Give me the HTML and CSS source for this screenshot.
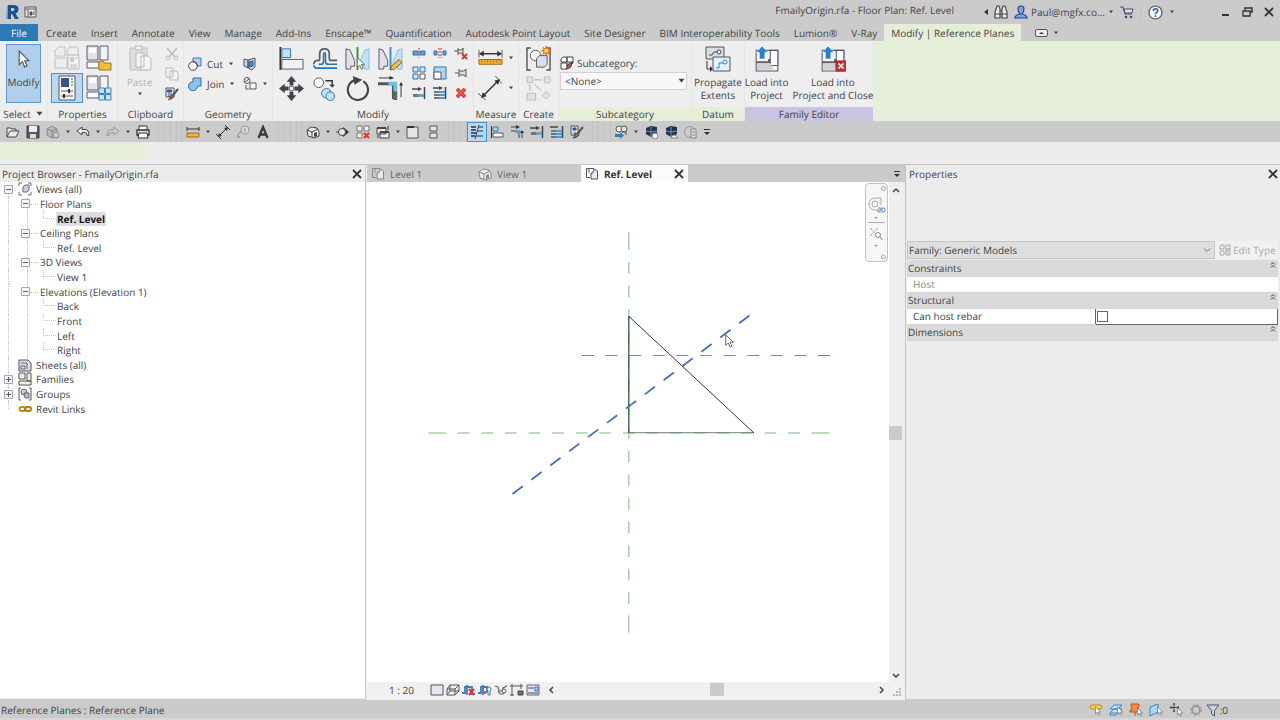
FILE: index.html
```
<!DOCTYPE html>
<html lang="en">
<head>
<meta charset="utf-8">
<title>FmailyOrigin.rfa - Floor Plan: Ref. Level</title>
<link rel="stylesheet" href="styles.css">
</head>
<body>
<svg class="sprite" aria-hidden="true">
  <symbol id="down" viewBox="0 0 6 4"><path d="M1 .5h4L3 3.2z" fill="#444"/></symbol>
  <symbol id="close" viewBox="0 0 10 10"><path d="M1 1l8 8M9 1L1 9" stroke="#333" stroke-width="1.8" fill="none"/></symbol>
  <symbol id="up2" viewBox="0 0 6 8"><path d="M1 3.5l2-2 2 2M1 6.5l2-2 2 2" stroke="#444" fill="none"/></symbol>
  <symbol id="minus" viewBox="0 0 9 9"><path d="M.5.5h8v8h-8z" fill="#f4f4f4" stroke="#a8a8a8"/><path d="M2 4.5h5" stroke="#4b5a86"/></symbol>
  <symbol id="plus" viewBox="0 0 9 9"><path d="M.5.5h8v8h-8z" fill="#f4f4f4" stroke="#a8a8a8"/><path d="M2 4.5h5M4.5 2v5" stroke="#4b5a86"/></symbol>
  <symbol id="cursor" viewBox="0 0 10 16"><path d="M.7 1v12l2.9-2.7 2 4.7 2.1-1-2-4.4h3.7z" fill="#fff" stroke="#555"/></symbol>
  <symbol id="plan" viewBox="0 0 14 14"><path d="M9 4V1.500H1.500v9H5M4 1.500v4" fill="none" stroke="currentColor"/><path d="M6 6h2V4l2-1.500L12.500 4v8H6z" fill="#e8e8ef" stroke="currentColor"/></symbol>
  <symbol id="house" viewBox="0 0 14 14"><path d="M1 5l4-3 6 1 2 4v4l-5 2-6-2z" fill="#eee" stroke="currentColor"/><path d="M1 5l5 2 6-3M6 7v5" fill="none" stroke="currentColor"/><path d="M8 8l3-1v4l-3 1z" fill="currentColor"/></symbol>
  <symbol id="family" viewBox="0 0 24 24"><path d="M1 1h11v14H1z" fill="#e3e3ea" stroke="#5b5d66"/><path d="M14 1h8v14h-8z" fill="#f2f2f5" stroke="#5b5d66"/><path d="M1 17h12v6H1z" fill="#fafafa" stroke="#5b5d66"/><path d="M3 3h7v5H3z" fill="#fff"/></symbol>
  <symbol id="box" viewBox="0 0 24 24"><path d="M2 4h20v19H2z" fill="#f5f5f5" stroke="#5b5d66"/><path d="M15 4h7v14h-7z" fill="#fff" stroke="#5b5d66"/><path d="M2 15h12v-3" fill="none" stroke="#5b5d66" stroke-width="2"/><path d="M3 16h12l3 6H3z" fill="#cfcfd6"/><path d="M5 12V6H2l5.500-6L13 6h-3v6z" fill="#2b7cd3" stroke="#fff" stroke-width=".5"/></symbol>
</svg>

<header class="titlebar">
  <svg class="i16" viewBox="0 0 16 16"><path d="M3 2l3-1v14H2z" fill="#6aa3d6"/><path d="M4 1h6.500q4 .5 4 4t-3 4.500L15 15h-4l-3-5H7v5H4z" fill="#17568f"/><path d="M7 4h2.500q2 1.500 0 3H7z" fill="#cbcbcb"/></svg>
  <svg class="i16" viewBox="0 0 16 16"><path d="M2 3h11v10H2z" fill="#eee" stroke="#555"/><path d="M2 5h11M5 5v8" stroke="#555"/><path d="M7 8h2v3H7zM10 8h2M10 10h2" stroke="#555" fill="#555"/></svg>
  <span class="doc">FmailyOrigin.rfa - Floor Plan: Ref. Level</span>
  <div class="account">
    <button class="ib" aria-label="Collapse"><svg width="4" height="6" viewBox="0 0 4 6"><path d="M4 0v6L0 3z" fill="#333"/></svg></button>
    <button class="ib" aria-label="Search"><svg class="i14" viewBox="0 0 14 14"><path d="M2 4l1-3h2l1 3v9H1V7zM12 4l-1-3H9L8 4v9h5V7zM6 6h2v3H6z" fill="#e8e8e8" stroke="#484850" stroke-width="1.200"/><path d="M1 9h5M8 9h5" stroke="#484850"/></svg></button>
    <button class="ib user"><svg class="i14" viewBox="0 0 14 14"><path d="M4 4q0-3 3-3t3 3-2 5q5 1 5 4H1q0-3 5-4Q4 7 4 4z" fill="#7da0e8" stroke="#25458c" stroke-width="1.200"/></svg>Paul@mgfx.co...<svg class="dn"><use href="#down"/></svg></button>
    <button class="ib" aria-label="Store"><svg class="i14" viewBox="0 0 14 14"><path d="M0 2h3l2 7h7" fill="none" stroke="#44506e" stroke-width="1.200"/><path d="M4 4h9l-1 4H5z" fill="#dde" stroke="#44506e"/><circle cx="6" cy="12" r="1.300" fill="#44506e"/><circle cx="11" cy="12" r="1.300" fill="#44506e"/></svg></button>
    <button class="ib help" aria-label="Help"><svg width="15" height="15" viewBox="0 0 15 15"><circle cx="7.500" cy="7.500" r="6.500" fill="#f6f8ff" stroke="#555" stroke-width="1.200"/><path d="M5.300 6q0-2.300 2.200-2.300T9.700 6Q9.700 7 7.500 8.500V9.300" stroke="#2b55b8" stroke-width="1.500" fill="none"/><path d="M6.700 10.300h1.600v1.600H6.700z" fill="#2b55b8"/></svg><svg class="dn"><use href="#down"/></svg></button>
  </div>
  <div class="winctl">
    <button class="ib" aria-label="Minimize"><svg width="10" height="10" viewBox="0 0 10 10"><path d="M1 8h7" stroke="#333" stroke-width="2"/></svg></button>
    <button class="ib" aria-label="Restore"><svg width="11" height="10" viewBox="0 0 11 10"><path d="M3 3V1h7v4H8" fill="none" stroke="#333" stroke-width="1.500"/><path d="M1 4h7v5H1z" fill="none" stroke="#333" stroke-width="1.300"/></svg></button>
    <button class="ib" aria-label="Close"><svg class="x"><use href="#close"/></svg></button>
  </div>
</header>

<nav class="tabs">
  <button class="tab file">File</button><button class="tab">Create</button><button class="tab">Insert</button><button class="tab">Annotate</button><button class="tab">View</button><button class="tab">Manage</button><button class="tab">Add-Ins</button><button class="tab">Enscape™</button><button class="tab">Quantification</button><button class="tab">Autodesk Point Layout</button><button class="tab">Site Designer</button><button class="tab">BIM Interoperability Tools</button><button class="tab">Lumion®</button><button class="tab">V-Ray</button><button class="tab current">Modify | Reference Planes</button>
  <button class="ib ribbonmode" aria-label="Ribbon display"><svg width="13" height="8" viewBox="0 0 13 8"><rect x=".5" y=".5" width="12" height="7" rx="1.500" fill="#eee" stroke="#555"/><path d="M4 5h5L6.500 3z" fill="#333"/></svg><svg class="dn"><use href="#down"/></svg></button>
</nav>

<section class="ribbon">
  <div class="panel">
    <div class="body select"><button class="modify"><svg width="12" height="18"><use href="#cursor"/></svg>Modify</button></div>
    <h2>Select <svg class="dn big"><use href="#down"/></svg></h2>
  </div>
  <div class="panel">
    <div class="body pair">
      <button class="ib" aria-label="Type properties"><svg class="i26" viewBox="0 0 26 26"><path d="M1 6l3-4h7v9H1zM13 6l3-4h8v8H13zM1 13h12v10H1z" fill="#eee" stroke="#c0c0c0"/><path d="M14 10h11v14H14z" fill="#f2f2f2" stroke="#bbb"/><path d="M16 12h4v5h-4z" fill="#ccc"/><path d="M16 20h7M16 22h7M21 13h3" stroke="#bbb"/></svg></button>
      <button class="ib" aria-label="Family category"><svg class="i26" viewBox="0 0 26 26"><use href="#family" width="24" height="24"/><path d="M13 16h4l1 2h7v7H13z" fill="#f2bc3c" stroke="#a8771c"/></svg></button>
      <button class="ib on" aria-label="Properties"><svg class="i26" viewBox="0 0 26 26"><path d="M5 1h16v24H5z" fill="#fafafa" stroke="#555"/><path d="M7 3h8v9H7z" fill="#33568c"/><path d="M17 4h2M17 7h2M17 10h2M7 16h12M7 21h12" stroke="#555"/><path d="M15 14v4M10 19v4" stroke="#333" stroke-width="2"/></svg></button>
      <button class="ib" aria-label="Family types"><svg class="i26" viewBox="0 0 26 26"><use href="#family" width="24" height="24"/><path d="M13 13h5.500v5.500H13zM19.500 13H25v5.500h-5.500zM13 19.500h5.500V25H13zM19.500 19.500H25V25h-5.500z" fill="#c4e6fa" stroke="#3d84ba"/></svg></button>
    </div>
    <h2>Properties</h2>
  </div>
  <div class="panel">
    <div class="body clip">
      <button class="paste" disabled><svg width="26" height="28" viewBox="0 0 26 28"><path d="M3 4h17v22H3z" fill="#ddd" stroke="#bcbcbc"/><path d="M8 2h7v4H8z" fill="#eee" stroke="#bcbcbc"/><path d="M9 9h8v14H9zM14 12h7l3 3v11H14z" fill="#f4f4f4" stroke="#bbb"/></svg>Paste<svg class="dn"><use href="#down"/></svg></button>
      <div class="trio">
        <button class="ib" aria-label="Cut"><svg class="i14" viewBox="0 0 14 14"><path d="M2 1l8 9M12 1L4 10" stroke="#bbb" stroke-width="1.500"/><circle cx="3" cy="11" r="2" fill="none" stroke="#bbb"/><circle cx="11" cy="11" r="2" fill="none" stroke="#bbb"/></svg></button>
        <button class="ib" aria-label="Copy"><svg class="i14" viewBox="0 0 14 14"><path d="M1 1h7v9H1zM5 4h6l2 2v7H5z" fill="#f0f0f0" stroke="#bbb"/></svg></button>
        <button class="ib" aria-label="Match type"><svg class="i14" viewBox="0 0 14 14"><path d="M1 1h8v9H1z" fill="#e2e7f5" stroke="#555"/><path d="M2.500 3h4v2h-4zM3 7h4M3 9h3" stroke="#33568c" fill="#33568c"/><path d="M13 2L8 8" stroke="#555" stroke-width="2"/><path d="M9 7q1 5-6 6 2-1 2-4z" fill="#8b6248" stroke="#444" stroke-width=".6"/></svg></button>
      </div>
    </div>
    <h2>Clipboard</h2>
  </div>
  <div class="panel">
    <div class="body geom">
      <button class="ib lbl"><svg class="i14" viewBox="0 0 14 14"><path d="M5 1h8v8H5z" fill="#a9d8f5" stroke="#3d74a8"/><circle cx="5" cy="9" r="4.300" fill="#fff" stroke="#444"/><path d="M5 4.700A4.300 4.300 0 019.300 9" fill="none" stroke="#c24" stroke-width="1.300"/></svg>Cut<svg class="dn"><use href="#down"/></svg></button>
      <button class="ib" aria-label="Cope"><svg class="i14" viewBox="0 0 14 14"><path d="M1 2l4 1v8l-4-2zM5 3l7-2v9l-3 3-4-2z" fill="#bfd8ee" stroke="#555"/><path d="M6 5l4-1v5l-4 1z" fill="#4a8fd0" stroke="#27598c"/></svg></button>
      <button class="ib lbl"><svg class="i14" viewBox="0 0 14 14"><path d="M5 1h8v8H9.500A4.500 4.500 0 115 4.700z" fill="#8ac4ee" stroke="#2c6ca6"/></svg>Join<svg class="dn"><use href="#down"/></svg></button>
      <button class="ib" aria-label="Paint"><svg class="i14" viewBox="0 0 14 14"><circle cx="4" cy="3.500" r="3" fill="#eee" stroke="#555"/><path d="M2 5l4-3M3 8v4h3M7 6h6v6H7z" fill="#fff" stroke="#555"/></svg><svg class="dn"><use href="#down"/></svg></button>
    </div>
    <h2>Geometry</h2>
  </div>
  <div class="panel">
    <div class="body edit">
      <div class="big8">
        <button class="ib" aria-label="Align"><svg class="i26" viewBox="0 0 26 26"><path d="M1.500 1v24" stroke="#333" stroke-width="2"/><path d="M3 3h9v9H3z" fill="#bfe2fa" stroke="#2f74ad"/><path d="M3 14h22v10H3z" fill="#f2f2f6" stroke="#5b5d66"/></svg></button>
        <button class="ib" aria-label="Offset"><svg class="i26" viewBox="0 0 26 26"><path d="M26 15h-7q-1 0-1-2V8q0-5-5-5T8 8v5q0 2-1 2H6q-4 0-4 4" fill="none" stroke="#5b5d66" stroke-width="1.800"/><path d="M26 19h-9q-3 0-3-3V8q0-1-1-1t-1 1v8q0 3-3 3H7M26 23H5q-3 0-3-3" fill="none" stroke="#2f74ad" stroke-width="1.600"/></svg></button>
        <button class="ib" aria-label="Mirror by axis"><svg class="i26" viewBox="0 0 26 26"><path d="M1 3l4 1 5 11v6h-4v3H1z" fill="#dfe1e7" stroke="#5b5d66"/><path d="M25 3l-4 1-5 11v6h4v3h5z" fill="#bfe2fa" stroke="#8bbbd8"/><path d="M13 1v24" stroke="#489035" stroke-width="2"/><use href="#cursor" x="12" y="11" width="9" height="14"/></svg></button>
        <button class="ib" aria-label="Mirror by drawing"><svg class="i26" viewBox="0 0 26 26"><path d="M1 3l4 1 5 11v6h-4v3H1z" fill="#dfe1e7" stroke="#5b5d66"/><path d="M25 3l-4 1-5 11v6h4v3h5z" fill="#bfe2fa" stroke="#8bbbd8"/><path d="M13 1v24" stroke="#4488bd" stroke-width="2"/><path d="M13 25l1-4 8-7 3 3-8 7z" fill="#f2bc3c" stroke="#8e5b26"/></svg></button>
        <button class="ib" aria-label="Move"><svg class="i26" viewBox="0 0 26 26"><path d="M13 0l5 6h-3v4h-4V6H8zM13 26l5-6h-3v-4h-4v4H8zM0 13l6-5v3h4v4H6v3zM26 13l-6-5v3h-4v4h4v3z" fill="#41434a"/><path d="M11 11h4v4h-4z" fill="#fff" stroke="#777"/></svg></button>
        <button class="ib" aria-label="Copy objects"><svg class="i26" viewBox="0 0 26 26"><circle cx="7" cy="7" r="5" fill="#fff" stroke="#555"/><path d="M14 5h7v5" fill="none" stroke="#333" stroke-width="1.500"/><path d="M18 9h6l-3 3z" fill="#333"/><circle cx="15" cy="18" r="5" fill="#bfe2fa" stroke="#2f74ad"/><circle cx="19" cy="21" r="4.500" fill="#bfe2fa" stroke="#2f74ad"/></svg></button>
        <button class="ib" aria-label="Rotate"><svg class="i26" viewBox="0 0 26 26"><path d="M10 4.500A10.500 10.500 0 1 0 19 5.500" fill="none" stroke="#41434a" stroke-width="2.200"/><path d="M8 0l10 4-8 5z" fill="#41434a"/></svg></button>
        <button class="ib" aria-label="Trim to corner"><svg class="i26" viewBox="0 0 26 26"><path d="M0 8h16v16" fill="none" stroke="#555" stroke-width="3"/><path d="M11 8h7v8" fill="none" stroke="#6ebcec" stroke-width="4"/><path d="M18 16v9" stroke="#666" stroke-width="4"/><path d="M1 2h13M24 22V9" stroke="#333"/><path d="M12 0l5 2-5 2zM22 10l2-4 2 4z" fill="#333"/></svg></button>
      </div>
      <div class="small9">
        <button class="ib" aria-label="Split"><svg class="i14" viewBox="0 0 14 14"><path d="M1 5h5v4H1zM8 5h5v4H8z" fill="#5aa5dc" stroke="#2f74ad"/><path d="M7 2v10" stroke="#c33" stroke-dasharray="2 1"/></svg></button>
        <button class="ib" aria-label="Split with gap"><svg class="i14" viewBox="0 0 14 14"><path d="M1 5h3v4H1zM10 5h3v4h-3z" fill="#5aa5dc" stroke="#2f74ad"/><path d="M6 2v10M8 2v10" stroke="#c33" stroke-dasharray="2 1"/></svg></button>
        <button class="ib" aria-label="Unpin"><svg class="i14" viewBox="0 0 14 14"><path d="M0 5h4M4 2v7M4 4h4l1-2v7L8 7H4" fill="none" stroke="#555"/><path d="M8 8l5 5M13 8l-5 5" stroke="#d33" stroke-width="2"/></svg></button>
        <button class="ib" aria-label="Array"><svg class="i14" viewBox="0 0 14 14"><path d="M1 1h5v5H1zM8 1h5v5H8zM1 8h5v5H1z" fill="#c4e6fa" stroke="#2f74ad"/><path d="M8 8h5v5H8z" fill="#fff" stroke="#555"/></svg></button>
        <button class="ib" aria-label="Scale"><svg class="i14" viewBox="0 0 14 14"><path d="M1 1h12v12H1z" fill="#a9d8f5" stroke="#2f74ad"/><path d="M1 6h7v7H1z" fill="#fff" stroke="#555"/></svg></button>
        <button class="ib" aria-label="Pin"><svg class="i14" viewBox="0 0 14 14"><path d="M1 7h4M5 3v8M5 5h5l2-2v8l-2-2H5" fill="#ddd" stroke="#555"/></svg></button>
        <button class="ib" aria-label="Trim single"><svg class="i14" viewBox="0 0 14 14"><path d="M0 3h8M12.500 1v12" stroke="#444" stroke-width="1.500"/><path d="M6 1l4 2-4 2z" fill="#444"/><path d="M1 8h5v3H1z" fill="#777"/><path d="M6 8h6v3H6z" fill="#5aa5dc"/></svg></button>
        <button class="ib" aria-label="Trim multiple"><svg class="i14" viewBox="0 0 14 14"><path d="M0 2h8M12.500 1v12" stroke="#444" stroke-width="1.500"/><path d="M1 6h5M1 9h5M1 12h5" stroke="#777" stroke-width="2"/><path d="M6 6h6M6 9h6M6 12h6" stroke="#4a9ddc" stroke-width="2"/><path d="M6 0l4 2-4 2z" fill="#444"/></svg></button>
        <button class="ib" aria-label="Delete"><svg class="i14" viewBox="0 0 14 14"><path d="M3 3l8 8M11 3l-8 8" stroke="#b52a2a" stroke-width="3.600"/><path d="M3 3l8 8M11 3l-8 8" stroke="#ee5252" stroke-width="2"/></svg></button>
      </div>
    </div>
    <h2>Modify</h2>
  </div>
  <div class="panel">
    <div class="body measure">
      <button class="ib" aria-label="Measure"><svg class="i26" viewBox="0 0 26 26"><path d="M2 8h22" stroke="#333" stroke-width="1.500"/><path d="M1 8l5-3v6zM25 8l-5-3v6z" fill="#333"/><path d="M1 4v8M25 4v8" stroke="#555"/><path d="M1 14h24v5H1z" fill="#f5b335" stroke="#9b6a1c"/><path d="M4 15v2M7 15v2M10 15v2M13 15v2M16 15v2M19 15v2M22 15v2" stroke="#9b6a1c"/></svg><svg class="dn"><use href="#down"/></svg></button>
      <button class="ib" aria-label="Aligned dimension"><svg class="i26" viewBox="0 0 26 26"><path d="M5 21L21 5" stroke="#333" stroke-width="1.500"/><path d="M3 23l2-6 4 4zM23 3l-2 6-4-4z" fill="#333"/><path d="M0 18l8 7M18 0l7 8" stroke="#555"/></svg><svg class="dn"><use href="#down"/></svg></button>
    </div>
    <h2>Measure</h2>
  </div>
  <div class="panel">
    <div class="body create">
      <button class="ib" aria-label="Create group"><svg class="i26" viewBox="0 0 26 26"><path d="M5 2H1v23h4M21 2h4v23h-4" fill="none" stroke="#555" stroke-width="1.500"/><circle cx="10" cy="10" r="5.500" fill="#f3f3f6" stroke="#555"/><path d="M11 13l3-3h8v9l-3 3h-8z" fill="#dcdde6" stroke="#555"/><path d="M21 0v10M16 5h10M17.500 1.500l7 7M24.500 1.500l-7 7" stroke="#e06a1b" stroke-width="1.500"/><circle cx="21" cy="5" r="2.800" fill="#ffd55c" stroke="#e06a1b"/></svg></button>
      <button class="ib" aria-label="Create similar"><svg class="i26" viewBox="0 0 26 26"><path d="M1 1h6v6H1zM19 1h6v6h-6zM1 18h9v7H1zM21 16l4 4-4 4-4-4z" fill="#e2e2e2" stroke="#bbb"/><path d="M9 4h7M4 9v6M9 9l7 6" stroke="#aaa"/></svg></button>
    </div>
    <h2>Create</h2>
  </div>
  <div class="panel green">
    <div class="body subcat">
      <label for="subcat"><svg class="i14" viewBox="0 0 14 14"><path d="M1 3l2-2h4v5H1zM7 1h6v5H7zM1 7h6v6H1z" fill="#fff" stroke="#444"/><path d="M13 6l-3 3" stroke="#444" stroke-width="2"/><path d="M11 7q2 5-5 6 2-1 1-4z" fill="#9d6252" stroke="#633"/></svg>Subcategory:</label>
      <div class="combo"><select id="subcat"><option>&lt;None&gt;</option></select><svg class="dn big"><use href="#down"/></svg></div>
    </div>
    <h2>Subcategory</h2>
  </div>
  <div class="panel green">
    <div class="body"><button class="tall"><svg class="i26" viewBox="0 0 26 26"><path d="M1 1h18v12H1z" fill="#dcdde2" stroke="#555"/><path d="M4 9h3l2-3h3" fill="none" stroke="#444"/><circle cx="14" cy="6" r="2" fill="#fff" stroke="#444"/><path d="M2 15v8h3" fill="none" stroke="#333"/><path d="M5 20l3 3-3 3z" fill="#333"/><path d="M8 11h17v14H8z" fill="#e2f2fc" stroke="#555"/><path d="M11 22h3v-5h4" fill="none" stroke="#2f80c2"/><circle cx="20" cy="16" r="2" fill="#fff" stroke="#2f80c2"/></svg><span>Propagate<br>Extents</span></button></div>
    <h2>Datum</h2>
  </div>
  <div class="panel violet">
    <div class="body load">
      <button class="tall"><svg class="i26" viewBox="0 0 26 26"><use href="#box" width="26" height="26"/></svg><span>Load into<br>Project</span></button>
      <button class="tall"><svg class="i26" viewBox="0 0 26 26"><use href="#box" width="26" height="26"/><path d="M16 15h10v10H16z" fill="#cf3030" stroke="#942020"/><path d="M18.500 17.500l5 5M23.500 17.500l-5 5" stroke="#fff" stroke-width="1.500"/></svg><span>Load into<br>Project and Close</span></button>
    </div>
    <h2>Family Editor</h2>
  </div>
  <div class="rest"></div>
</section>

<div class="qat">
  <button class="ib q" aria-label="Open"><svg class="i14" viewBox="0 0 14 14"><path d="M1 12V3h4l1 1h4v2M1 12l3-6h9l-3 6z" fill="#eee" stroke="#444"/></svg></button>
  <button class="ib q" aria-label="Save"><svg class="i14" viewBox="0 0 14 14"><path d="M1 1h12v12H1z" fill="#55585f" stroke="#3d3f45"/><path d="M3 1h8v6H3z" fill="#eee"/><path d="M4 9h6v4H4z" fill="#ddd"/></svg></button>
  <button class="ib q" aria-label="Sync"><svg class="i14" viewBox="0 0 14 14"><path d="M1 4l5-3 5 3v6l-5 3-5-3z" fill="#bbb" stroke="#888"/><path d="M1 4l5 2 5-2M6 6v7" fill="none" stroke="#888"/><circle cx="10" cy="10" r="3" fill="#ccc" stroke="#888"/></svg></button><svg class="dn q"><use href="#down"/></svg>
  <button class="ib q" aria-label="Undo"><svg class="i14" viewBox="0 0 14 14"><path d="M1 6l5-4v2.500h3q4 0 4 6h-2q0-3-2-3H6V10z" fill="#eee" stroke="#444"/></svg></button><svg class="dn q"><use href="#down"/></svg>
  <button class="ib q" aria-label="Redo"><svg class="i14" viewBox="0 0 14 14"><path d="M13 6L8 2v2.500H5q-4 0-4 6h2q0-3 2-3h3V10z" fill="#ccc" stroke="#999"/></svg></button><svg class="dn q"><use href="#down"/></svg>
  <button class="ib q" aria-label="Print"><svg class="i14" viewBox="0 0 14 14"><path d="M3 5V1h8v4" fill="#fff" stroke="#333"/><path d="M1 5h12v5H1z" fill="#ddd" stroke="#333" stroke-width="1.300"/><path d="M3 8h8l1 5H2z" fill="#fff" stroke="#333"/></svg></button>
  <i class="grip"></i>
  <button class="ib q" aria-label="Measure"><svg class="i14" viewBox="0 0 14 14"><path d="M1 4h12M1 2v4M13 2v4" stroke="#333"/><path d="M1 8h12v4H1z" fill="#f5b335" stroke="#9b6a1c"/></svg></button><svg class="dn q"><use href="#down"/></svg>
  <button class="ib q" aria-label="Dimension"><svg class="i14" viewBox="0 0 14 14"><path d="M3 11l8-8M0 9l5 5M9 0l5 5" stroke="#333"/><path d="M2 12l1-4 3 3zM12 2l-1 4-3-3z" fill="#333"/></svg></button>
  <button class="ib q" aria-label="Tag"><svg class="i14" viewBox="0 0 14 14"><circle cx="9" cy="5" r="4" fill="#ddd" stroke="#999"/><path d="M9 3v4M2 12q0-5 3-5M1 12h3" stroke="#888" fill="none"/></svg></button>
  <button class="ib q" aria-label="Text"><svg class="i14" viewBox="0 0 14 14"><path d="M2.500 13L7 2l4.500 11M4.500 9.500h5" fill="none" stroke="#3a3a3a" stroke-width="2.300"/></svg></button>
  <i class="grip"></i>
  <button class="ib q dk" aria-label="3D view"><svg class="i14"><use href="#house"/></svg></button><svg class="dn q"><use href="#down"/></svg>
  <button class="ib q" aria-label="Section"><svg class="i14" viewBox="0 0 14 14"><path d="M7 2v10l6-5z" fill="#333"/><circle cx="6" cy="7" r="3.500" fill="#eee" stroke="#444"/><path d="M0 7h3" stroke="#444"/></svg></button>
  <button class="ib q" aria-label="Close hidden"><svg class="i14" viewBox="0 0 14 14"><path d="M1 1h5v5H1zM8 1h5v5H8zM1 8h5v5H1z" fill="#eee" stroke="#777"/><path d="M8 8l5 5M13 8l-5 5" stroke="#d33" stroke-width="2"/></svg></button>
  <button class="ib q" aria-label="Switch windows"><svg class="i14" viewBox="0 0 14 14"><path d="M1 3h9v6H1zM4 7h9v6H4z" fill="#eee" stroke="#444"/><path d="M1 3h9M4 7h9" stroke="#444" stroke-width="2"/><path d="M12 1v4M2 10v3" stroke="#333"/></svg></button><svg class="dn q"><use href="#down"/></svg>
  <button class="ib q" aria-label="Tab views"><svg class="i14" viewBox="0 0 14 14"><path d="M1 2h11v11H1z" fill="#e4e4ea" stroke="#555"/><path d="M1 2h7" stroke="#333" stroke-width="2"/></svg></button>
  <button class="ib q" aria-label="Tile views"><svg class="i14" viewBox="0 0 14 14"><path d="M4 1h7v5H4zM4 8h7v5H4z" fill="#e4e4ea" stroke="#555"/></svg></button>
  <i class="grip sm"></i>
  <button class="ib q on" aria-label="Thin lines"><svg class="i14" viewBox="0 0 14 14"><path d="M1 2h5M1 5h5M1 8h5M1 11h4" stroke="#333" stroke-width="1.500"/><path d="M8 2h5M7 6h6M6 11h7" stroke="#2f74ad" stroke-width="1.500"/><path d="M9 0L5 14" stroke="#444"/></svg></button>
  <button class="ib q" aria-label="Align"><svg class="i14" viewBox="0 0 14 14"><path d="M1.500 1v12" stroke="#333"/><path d="M3 2h5v4H3z" fill="#a9d8f5" stroke="#2f74ad"/><path d="M3 8h10v4H3z" fill="#fff" stroke="#555"/></svg></button>
  <button class="ib q" aria-label="Trim corner"><svg class="i14" viewBox="0 0 14 14"><path d="M1 2h7M1 6h8v7M12 13V7" fill="none" stroke="#444"/><path d="M5 6.500h4v4" fill="none" stroke="#4a9ddc" stroke-width="2.500"/><path d="M6 0l4 2-4 2zM10 8l2-3 2 3z" fill="#333"/></svg></button>
  <button class="ib q" aria-label="Trim single"><svg class="i14" viewBox="0 0 14 14"><path d="M0 3h8M12.500 1v12" stroke="#444" stroke-width="1.500"/><path d="M6 1l4 2-4 2z" fill="#444"/><path d="M1 7h5v3H1z" fill="#777"/><path d="M6 7h6v3H6z" fill="#5aa5dc"/></svg></button>
  <button class="ib q" aria-label="Trim multiple"><svg class="i14" viewBox="0 0 14 14"><path d="M0 2h8M12.500 1v12" stroke="#444" stroke-width="1.500"/><path d="M1 6h5M1 9h5M1 12h5" stroke="#777" stroke-width="2"/><path d="M6 6h6M6 9h6M6 12h6" stroke="#4a9ddc" stroke-width="2"/></svg></button>
  <button class="ib q" aria-label="Match"><svg class="i14" viewBox="0 0 14 14"><path d="M1 1h7v9H1z" fill="#e2e7f5" stroke="#555"/><path d="M3 3h3v2H3zM3 8h3" stroke="#33568c" fill="#33568c"/><path d="M13 2L8 8" stroke="#555" stroke-width="2"/><path d="M9 7q1 5-6 6 2-1 2-4z" fill="#777" stroke="#444"/></svg></button>
  <i class="grip sm"></i>
  <button class="ib q" aria-label="Export"><svg class="i14" viewBox="0 0 14 14"><circle cx="5" cy="4" r="3" fill="#eee" stroke="#555"/><circle cx="10" cy="4" r="3" fill="#ddd" stroke="#555"/><path d="M8 7h4v3" fill="none" stroke="#555"/><path d="M1 9h5V7l4 3.500L6 14v-2H1z" fill="#2b7cd3"/></svg></button><svg class="dn q"><use href="#down"/></svg>
  <button class="ib q" aria-label="Render"><svg class="i14" viewBox="0 0 14 14"><path d="M2 3l5-2 6 1v7l-6 3-5-3z" fill="#20324f"/><path d="M2 6l5 1 6-1M7 2v10" stroke="#8092b0" fill="none"/><circle cx="11" cy="11" r="3" fill="#eee" stroke="#888"/></svg></button>
  <button class="ib q" aria-label="Render cloud"><svg class="i14" viewBox="0 0 14 14"><path d="M2 3l5-2 6 1v7l-6 3-5-3z" fill="#20324f"/><path d="M2 6l5 1 6-1M7 2v10" stroke="#8092b0" fill="none"/><path d="M7 13q0-3 3-3t4 3z" fill="#eee" stroke="#888"/></svg></button>
  <button class="ib q" aria-label="Gallery"><svg class="i14" viewBox="0 0 14 14"><circle cx="6" cy="7" r="5.500" fill="#ccc" stroke="#999"/><path d="M7 4h5v9H7zM8 7h3M8 10h3" fill="#ddd" stroke="#888"/></svg></button>
  <button class="ib more" aria-label="Customize"><svg width="8" height="8" viewBox="0 0 8 8"><path d="M1 1.500h6" stroke="#333"/><path d="M1 4h6L4 7z" fill="#333"/></svg></button>
</div>
<div class="options"><div class="hint"></div></div>

<main class="work">
  <aside class="browser">
    <header class="bar"><span>Project Browser - FmailyOrigin.rfa</span><button class="ib" aria-label="Close browser"><svg class="x"><use href="#close"/></svg></button></header>
    <ul class="tree">
      <li class="l0 first"><svg class="ex"><use href="#minus"/></svg><svg class="i14" viewBox="0 0 14 14"><path d="M1 4V1h3M10 1h3v3M13 10v3h-3M4 13H1v-3" fill="none" stroke="#666"/><path d="M5 5l2-2h4v5l-2 2H5z" fill="#ccd" stroke="#667"/></svg><span>Views (all)</span></li>
      <li class="l1"><svg class="ex"><use href="#minus"/></svg><span>Floor Plans</span></li>
      <li class="l2"><span class="sel">Ref. Level</span></li>
      <li class="l1"><svg class="ex"><use href="#minus"/></svg><span>Ceiling Plans</span></li>
      <li class="l2"><span>Ref. Level</span></li>
      <li class="l1"><svg class="ex"><use href="#minus"/></svg><span>3D Views</span></li>
      <li class="l2"><span>View 1</span></li>
      <li class="l1"><svg class="ex"><use href="#minus"/></svg><span>Elevations (Elevation 1)</span></li>
      <li class="l2 cont"><span>Back</span></li>
      <li class="l2 cont"><span>Front</span></li>
      <li class="l2 cont"><span>Left</span></li>
      <li class="l2"><span>Right</span></li>
      <li class="l0"><i class="stub"></i><svg class="i14" viewBox="0 0 14 14"><path d="M1 2h9l3 3v8H1z" fill="#dde" stroke="#555"/><path d="M3 8h4v3H3zM3 5h6v6" fill="none" stroke="#667"/></svg><span>Sheets (all)</span></li>
      <li class="l0"><svg class="ex"><use href="#plus"/></svg><svg class="i14" viewBox="0 0 14 14"><path d="M1 1h6v6H1zM1 9h12v4H1zM9 1h4v8H9z" fill="#eee" stroke="#555"/></svg><span>Families</span></li>
      <li class="l0"><svg class="ex"><use href="#plus"/></svg><svg class="i14" viewBox="0 0 14 14"><path d="M3 1H1v12h2M11 1h2v12h-2" fill="none" stroke="#555"/><circle cx="6" cy="5" r="3" fill="#ccd" stroke="#667"/><path d="M6 6h5v5H7z" fill="#bbc" stroke="#667"/></svg><span>Groups</span></li>
      <li class="l0 last"><i class="stub"></i><svg class="i14" viewBox="0 0 14 14"><rect x="1.500" y="5" width="6" height="4" rx="2" fill="none" stroke="#c98a1b" stroke-width="2"/><rect x="7" y="5" width="6" height="4" rx="2" fill="none" stroke="#b87a14" stroke-width="2"/></svg><span>Revit Links</span></li>
    </ul>
  </aside>

  <section class="view">
    <div class="viewtabs">
      <button class="vt"><svg class="i14"><use href="#plan"/></svg>Level 1</button>
      <button class="vt"><svg class="i14"><use href="#house"/></svg>View 1</button>
      <button class="vt cur"><svg class="i14"><use href="#plan"/></svg>Ref. Level<svg class="x"><use href="#close"/></svg></button>
      <button class="ib listall" aria-label="All views"><svg width="8" height="8" viewBox="0 0 8 8"><path d="M1 1.500h6" stroke="#333"/><path d="M1 4h6L4 7z" fill="#333"/></svg></button>
    </div>
    <div class="stage">
      <svg class="drawing" viewBox="367 182 522 500">
        <g fill="none" stroke="#a6cfa6" stroke-width="1.500">
          <path d="M628.800 232.500v17.500M628.800 615.300v17.400"/>
          <path d="M628.800 262V604" stroke-dasharray="11.700 11.900"/>
          <path d="M428.500 432.900H446.500M811.500 432.900H829.500"/>
          <path d="M457.800 432.900H800" stroke-dasharray="11.700 11.900"/>
        </g>
        <path d="M582 355.500H830" fill="none" stroke="#5fa564" stroke-width="1.200" stroke-dasharray="12 11.600"/>
        <path d="M628.800 316V433" stroke="#365c38" stroke-width="1.300"/>
        <path d="M629 432.700H754" stroke="#6f806f"/>
        <path d="M629 316.500L754 433" stroke="#333"/>
        <path d="M512.500 494L749.500 315.500" stroke="#4870b0" stroke-width="1.800" stroke-dasharray="12.800 10.850"/>
        <use href="#cursor" x="725" y="334" width="9" height="14"/>
      </svg>
      <div class="navbar">
        <svg width="23" height="80" viewBox="0 0 23 80"><g fill="none" stroke="#aaa"><circle cx="17.500" cy="4.500" r="2"/><circle cx="17.500" cy="73" r="2"/><path d="M2 38.500h17"/><path d="M12 26H9a6 6 0 110-12h6v7"/><circle cx="9" cy="20" r="3"/></g><path d="M12 24h3v2h-3v2h3M16 24v4h2l1-1v-2l-1-1z" fill="none" stroke="#6d8fc4"/><path d="M8 33h4l-2 2zM8 61h4l-2 2z" fill="#999"/><path d="M5 45l6 6M5 51l6-6M4 45h2M10 45h2M4 51h2" stroke="#aaa" stroke-dasharray="2 1"/><circle cx="12" cy="51" r="2.500" fill="#fff" stroke="#888"/><path d="M14 53l2 3" stroke="#888"/></svg>
      </div>
    </div>
    <div class="vscroll">
      <svg width="8" height="6" viewBox="0 0 8 6"><path d="M1 5l3-3 3 3" stroke="#444" stroke-width="1.500" fill="none"/></svg>
      <i class="thumb"></i>
      <svg width="8" height="6" viewBox="0 0 8 6"><path d="M1 1l3 3 3-3" stroke="#444" stroke-width="1.500" fill="none"/></svg>
    </div>
    <div class="viewctl">
      <span class="scale">1 : 20</span>
      <div class="vicons">
        <button class="ib" aria-label="Detail level"><svg class="i14" viewBox="0 0 14 14"><path d="M1 2h12v10H1z" fill="#e6e6f0" stroke="#555"/></svg></button>
        <button class="ib" aria-label="Visual style"><svg class="i14" viewBox="0 0 14 14"><path d="M1 6h8v6H1zM4 2h9v6H4zM1 6l3-4M9 6l4-4M9 12l4-4M1 12l3-4" fill="none" stroke="#555"/></svg></button>
        <button class="ib" aria-label="Crop off"><svg class="i14" viewBox="0 0 14 14"><path d="M0 10h3V4h7v7h3M5 2v10" fill="none" stroke="#3f7dbb" stroke-width="1.800"/><path d="M7 6l5 6M12 6l-5 6" stroke="#d33" stroke-width="2"/></svg></button>
        <button class="ib" aria-label="Crop region"><svg class="i14" viewBox="0 0 14 14"><path d="M0 10h3V4h6v6M5 2v10" fill="none" stroke="#3f7dbb" stroke-width="1.800"/><path d="M9 6a2 2 0 114 0l-1 3v3h-2V9z" fill="#def" stroke="#57a"/><path d="M6 8h2v3H6z" fill="#d55"/></svg></button>
        <button class="ib" aria-label="Hide isolate"><svg class="i14" viewBox="0 0 14 14"><path d="M1 3l3 1 1 4h3l1-3 4-2M4 8q3 6 7 1" fill="none" stroke="#666" stroke-width="1.200"/><circle cx="10" cy="8" r="2" fill="#eee" stroke="#567"/></svg></button>
        <button class="ib" aria-label="Constraints"><svg class="i14" viewBox="0 0 14 14"><path d="M0 3h13M2 1v12M11 1v5M0 12h4" stroke="#555" fill="none"/><path d="M8 8h5v4H8z" fill="#777" stroke="#444"/></svg></button>
        <button class="ib" aria-label="Preview"><svg class="i14" viewBox="0 0 14 14"><path d="M1 2h12v10H1z" fill="#e6e6f0" stroke="#667"/><path d="M2 5h6M2 10h10" stroke="#99a" stroke-width="2"/><path d="M9 4h3v4H9z" fill="#acf" stroke="#47b"/></svg></button>
      </div>
      <div class="hscroll">
        <svg width="6" height="8" viewBox="0 0 6 8"><path d="M5 1L2 4l3 3" stroke="#444" stroke-width="1.500" fill="none"/></svg>
        <i class="thumb"></i>
        <svg width="6" height="8" viewBox="0 0 6 8"><path d="M1 1l3 3-3 3" stroke="#444" stroke-width="1.500" fill="none"/></svg>
      </div>
      <svg class="resize" viewBox="0 0 10 10"><path d="M7 1h2v2H7zM4 4h2v2H4zM7 4h2v2H7zM1 7h2v2H1zM4 7h2v2H4zM7 7h2v2H7z" fill="#b5b5b5"/></svg>
    </div>
  </section>

  <aside class="props">
    <header class="bar"><span>Properties</span><button class="ib" aria-label="Close properties"><svg class="x"><use href="#close"/></svg></button></header>
    <div class="preview"></div>
    <div class="type">
      <div class="combo grey"><select aria-label="Type"><option>Family: Generic Models</option></select><svg width="8" height="6" viewBox="0 0 8 6"><path d="M1 1.500l3 3 3-3" stroke="#777" fill="none"/></svg></div>
      <button class="edit-type" disabled><svg width="12" height="12" viewBox="0 0 12 12"><path d="M1 2l1-1h3v4H1zM7 1h4v4H7zM1 7h4v4H1zM7 5h4v6H7zM8 7h2M8 9h2" fill="#eee" stroke="#aaa"/></svg>Edit Type</button>
    </div>
    <table class="grid">
      <colgroup><col class="name"><col></colgroup>
      <tbody>
        <tr class="grp"><th colspan="2"><div>Constraints<svg width="6" height="8"><use href="#up2"/></svg></div></th></tr>
        <tr class="off"><td>Host</td><td></td></tr>
        <tr class="grp"><th colspan="2"><div>Structural<svg width="6" height="8"><use href="#up2"/></svg></div></th></tr>
        <tr><td><label for="rebar">Can host rebar</label></td><td class="focus"><input type="checkbox" id="rebar"></td></tr>
        <tr class="grp"><th colspan="2"><div>Dimensions<svg width="6" height="8"><use href="#up2"/></svg></div></th></tr>
      </tbody>
    </table>
  </aside>
</main>

<footer class="status">
  <span>Reference Planes : Reference Plane</span>
  <div class="sicons">
    <button class="ib q" aria-label="Select links"><svg class="i14" viewBox="0 0 14 14"><rect x="1" y="2" width="12" height="4" rx="2" fill="#f5cf55" stroke="#b98b17"/><use href="#cursor" x="6" y="3" width="6" height="10"/></svg></button>
    <button class="ib q" aria-label="Select underlay"><svg class="i14" viewBox="0 0 14 14"><path d="M1 6l4-4h8l-4 4zM1 10l4-4h8l-4 4zM1 10v2h7" fill="#bfe2fa" stroke="#3d84ba"/><use href="#cursor" x="8" y="3" width="6" height="10"/></svg></button>
    <button class="ib q" aria-label="Select pinned"><svg class="i14" viewBox="0 0 14 14"><path d="M2 1h8v3H9v3h2v2H1V7h2V4H2zM6 9v4" fill="#f38a4a" stroke="#bf5820"/><use href="#cursor" x="8" y="4" width="6" height="10"/></svg></button>
    <button class="ib q" aria-label="Select by face"><svg class="i14" viewBox="0 0 14 14"><path d="M1 4l8-3v8l-8 4z" fill="#a9d8f5" stroke="#3d84ba"/><use href="#cursor" x="8" y="3" width="6" height="10"/></svg></button>
    <button class="ib q" aria-label="Drag on selection"><svg class="i14" viewBox="0 0 14 14"><path d="M5 0v9M1 4.500h9M4 1h2M4 8h2M2 3v3M9 3v3" stroke="#444"/><use href="#cursor" x="8" y="4" width="6" height="10"/></svg></button>
    <button class="ib q" aria-label="Background processes"><svg class="i14" viewBox="0 0 14 14"><circle cx="7" cy="7" r="4" fill="none" stroke="#8d8d8d" stroke-width="1.500"/><circle cx="7" cy="7" r="5.500" fill="none" stroke="#999" stroke-dasharray="2 2.300"/></svg></button>
    <button class="ib flt"><svg class="i14" viewBox="0 0 14 14"><path d="M1 2h12L8.500 7.500V13l-3-2V7.500z" fill="#d0d3e2" stroke="#4d5264"/></svg>:0</button>
  </div>
</footer>
</body>
</html>
```
FILE: styles.css
```
* { box-sizing: border-box; }
html, body { height: 100%; }
body {
  margin: 0;
  display: flex;
  flex-direction: column;
  overflow: hidden;
  background: #cbcbcb;
  color: #444;
  font: 10px/14px "Open Sans", "Noto Sans", sans-serif;
  text-rendering: geometricPrecision;
}
button, select, input { font: inherit; color: inherit; margin: 0; text-rendering: inherit; }
button { background: none; border: 0; padding: 0; white-space: nowrap; }
svg { display: block; flex: none; }
.sprite { position: absolute; width: 0; height: 0; }
.i14 { width: 14px; height: 14px; }
.i16 { width: 16px; height: 16px; }
.i26 { width: 26px; height: 26px; }
.x { width: 10px; height: 10px; }
.dn { width: 6px; height: 4px; }
.dn.big { width: 9px; height: 6px; }
.ib { display: flex; align-items: center; justify-content: center; }

/* Title bar */
.titlebar { display: flex; align-items: center; height: 24px; padding: 0 6px 0 4px; gap: 3px; flex: none; }
.doc { margin-left: auto; padding: 0 27px 4px 0; }
.account { display: flex; align-items: center; gap: 6px; width: 218px; }
.user { gap: 3px; }
.help { gap: 6px; border-left: 1px solid #bfbfbf; padding-left: 7px; }
.winctl { display: flex; align-items: center; gap: 11px; margin-left: 16px; }

/* Ribbon tabs */
.tabs { display: flex; height: 17px; flex: none; }
.tab { padding: 0 7px; }
.file { width: 38px; background: #2c79b5; color: #fff; margin-right: 1px; }
.current { background: #e4eed8; }
.ribbonmode { gap: 5px; margin-left: 14px; }

/* Ribbon */
.ribbon {
  display: grid;
  grid-template-columns: 48px 70px 66px 89px 201px 45px 40px 133px 53px 129px 1fr;
  height: 80px;
  flex: none;
  background: #eee;
}
.panel { display: flex; flex-direction: column; border-right: 1px solid #e6e6e6; min-width: 0; }
.panel h2 { margin: 0; height: 14px; font-size: 10px; font-weight: 400; display: flex; align-items: center; justify-content: center; gap: 4px; }
.body { flex: 1; display: flex; justify-content: center; min-height: 0; }
.green h2, .rest { background: #e4eed8; }
.violet h2 { background: #c8c4e2; }
.select { padding: 3px 6px 4px; }
.modify { flex: 1; border: 1px solid #5e9cd3; background: #b1cfec; display: flex; flex-direction: column; align-items: center; gap: 7px; padding-top: 5px; }
.pair { display: grid; grid-template-columns: 32px 32px; grid-template-rows: 30px 30px; padding-top: 2px; justify-content: center; }
.on { background: #bdd7f0; border: 1px solid #4d92cf; }
.clip { gap: 8px; padding-top: 3px; }
.paste { display: flex; flex-direction: column; align-items: center; gap: 2px; width: 34px; color: #b5b5b5; line-height: 16px; }
.trio { display: grid; grid-template-rows: repeat(3, 20px); }
.geom { display: grid; grid-template-columns: 50px 26px; grid-template-rows: 20px 20px; justify-content: start; align-content: center; padding-left: 4px; column-gap: 5px; justify-items: start; }
.geom .ib { gap: 5px; }
.edit { gap: 1px; padding: 2px 0 0 2px; justify-content: flex-start; }
.edit .i26, .measure .i26, .create .i26 { width: 25px; height: 25px; }
.big8 { display: grid; grid-template-columns: repeat(4, 33px); grid-template-rows: 30px 30px; }
.small9 { display: grid; grid-template-columns: repeat(3, 21px); grid-template-rows: repeat(3, 20px); }
.measure, .create { flex-direction: column; justify-content: flex-start; align-items: center; padding-top: 2px; }
.measure .ib, .create .ib { height: 30px; gap: 5px; }
.subcat { flex-direction: column; justify-content: flex-start; padding: 15px 4px 0 1px; gap: 2px; }
.subcat label { display: flex; align-items: center; gap: 3px; }
.combo { display: flex; align-items: center; background: #f8f8f8; border: 1px solid #d2d2d2; height: 18px; position: relative; }
.combo select { appearance: none; border: 0; background: none; flex: 1; padding: 0 4px; min-width: 0; }
.combo svg { position: absolute; right: 0; pointer-events: none; }
.tall { display: flex; flex-direction: column; align-items: center; gap: 4px; padding-top: 5px; line-height: 13px; }
.load { gap: 4px; }

/* Quick access toolbar */
.qat { display: flex; align-items: center; height: 21px; padding-left: 3px; flex: none; }
.ib.q { width: 20px; height: 20px; }
.dn.q { width: 10px; }
.dk { color: #444; }
.grip { width: 30px; height: 21px; background: repeating-linear-gradient(90deg, #cbcbcb 0 5px, #c2c2c2 5px 6px); }
.grip.sm { width: 24px; }
.more { width: 12px; }
.options { height: 23px; flex: none; background: #ececec; border-bottom: 1px solid #c6c6c6; }
.hint { width: 145px; height: 18px; background: #e4eed8; }

/* Work area */
.work { flex: 1; display: grid; grid-template-columns: 366px minmax(0, 1fr) 374px; min-height: 0; background: #ececec; }
.bar { display: flex; align-items: center; justify-content: space-between; height: 17px; padding: 0 3px 0 2px; background: #ececec; }
.props .bar { padding-right: 0; }
.browser { display: flex; flex-direction: column; background: #fff; border-right: 1px solid #c9c9c9; min-height: 0; margin-bottom: 2px; }
.tree { list-style: none; margin: 0; padding: 0; height: 234px; display: grid; grid-auto-rows: 1fr; }
.tree li { display: flex; align-items: center; position: relative; }
.tree .ex { width: 9px; height: 9px; z-index: 1; }
.l0 { padding-left: 4px; }
.l0 .i14 { margin: 0 4px 0 5px; }
.l1 { padding-left: 21px; }
.l1 .ex { margin-right: 10px; }
.l2 { padding-left: 57px; }
.stub { width: 9px; }
.sel { font-weight: 700; color: #111; background: #dedee2; margin-left: -1px; padding: 0 1px; line-height: 14px; }
.tree li::before { content: ""; position: absolute; left: 8px; top: 0; bottom: 0; width: 18px; border-left: 1px dotted #c4c4c4; }
.l1::before, .l2::before { border-right: 1px dotted #c4c4c4; }
.tree .l0::before { width: 10px; }
.tree .first::before { top: 50%; }
.tree .last::before { bottom: 50%; }
.l1::after { content: ""; position: absolute; left: 30px; width: 8px; top: 50%; border-top: 1px dotted #c4c4c4; }
.l2::after { content: ""; position: absolute; left: 43px; width: 12px; top: 0; bottom: 50%; border-left: 1px dotted #c4c4c4; border-bottom: 1px dotted #c4c4c4; }

.view { display: grid; grid-template-columns: minmax(0, 1fr) 16px; grid-template-rows: 17px minmax(0, 1fr) 18px; border-left: 1px solid #eee; border-right: 1px solid #c4c4c4; }
.viewtabs { grid-column: 1 / 3; display: flex; background: #cbcbcb; }
.vt { width: 107px; display: flex; align-items: center; gap: 5px; padding: 0 4px; color: #666; }
.vt svg { color: #888; }
.vt.cur { background: #fcfcfc; color: #333; font-weight: 700; }
.vt.cur svg { color: #556; }
.vt .x { margin-left: auto; }
.listall { margin-left: auto; width: 17px; }
.stage { background: #fff; position: relative; min-width: 0; min-height: 0; }
.drawing { width: 100%; height: 100%; }
.navbar { position: absolute; right: 1px; top: 1px; border: 1px solid #c2c2c2; border-radius: 4px; background: #f6f6f6; height: 79px; overflow: hidden; width: 23px; }
.vscroll { background: #eee; display: flex; flex-direction: column; align-items: center; justify-content: space-between; padding: 5px 3px 3px 0; }
.vscroll .thumb { width: 13px; height: 14px; background: #cbcbcb; }
.viewctl { grid-column: 1 / 3; display: flex; align-items: center; background: #f0f0f0; padding: 0 3px 3px 0; }
.scale { padding-left: 22px; width: 63px; }
.vicons { display: flex; gap: 2px; }
.vicons .ib { width: 14px; }
.viewctl > .hscroll { flex: 1; display: flex; align-items: center; justify-content: space-between; padding: 0 7px 0 8px; height: 14px; }
.hscroll .thumb { width: 14px; height: 13px; background: #cbcbcb; }
.resize { width: 10px; height: 10px; align-self: flex-end; }

.props { display: flex; flex-direction: column; padding: 0 2px 0 1px; min-width: 0; }
.preview { height: 59px; }
.type { display: flex; height: 18px; }
.grey { flex: 1; background: #dedede; border-color: #c6c6c6; }
.grey select { padding: 0 1px; }
.grey svg { right: 3px; }
.edit-type { width: 63px; display: flex; align-items: center; gap: 2px; padding-left: 4px; background: #f1f1f1; color: #aaa; }
.grid { width: 100%; border-collapse: collapse; table-layout: fixed; margin-top: 1px; }
.name { width: 188px; }
.grid tr { height: 16px; background: #fff; }
.grid td, .grid th { padding: 0 0 0 6px; text-align: left; font-weight: 400; line-height: 14px; height: 16px; border-bottom: 1px solid #d4d4d4; }
.grid .grp { background: #dadada; }
.grid .grp th { padding: 0 2px 0 1px; }
.grp div { display: flex; justify-content: space-between; }
.grid .off { color: #888; }
.grid .focus { border: 1px solid #666; padding: 0 0 0 1px; }
.grid input { appearance: none; display: block; width: 11px; height: 11px; border: 1px solid #666; background: #fff; }

/* Status bar */
.status { height: 21px; flex: none; display: flex; align-items: center; justify-content: space-between; padding: 2px 52px 0 1px; border-bottom: 2px solid #d6d6d6; }
.sicons { display: flex; }
```
